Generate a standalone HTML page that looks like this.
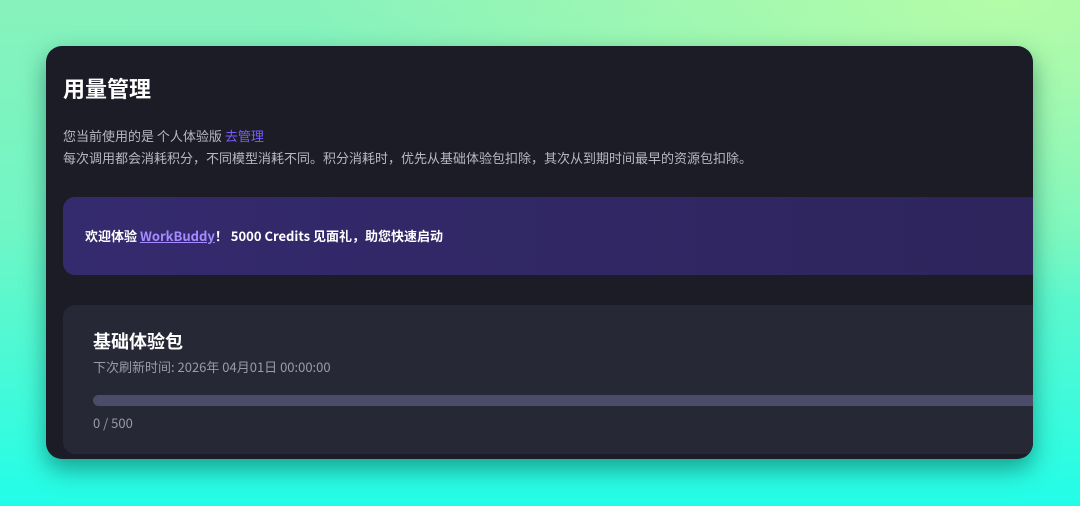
<!DOCTYPE html>
<html><head><meta charset="utf-8"><style>
*{margin:0;padding:0;box-sizing:border-box}
body{width:1080px;height:506px;overflow:hidden;font-family:"Noto Sans CJK SC","Liberation Sans",sans-serif;
background:radial-gradient(ellipse 700px 300px at 1000px 0px,#b4fca8 0%,rgba(180,252,168,0) 100%),linear-gradient(180deg,#88f2bc 0%,#70f6c4 45%,#22fde8 100%);position:relative}
.card{position:absolute;left:46px;top:46px;width:987px;height:413px;border-radius:16px;background:#1c1c26;overflow:hidden;
box-shadow:0 10px 24px rgba(0,70,60,.5)}
h1{position:absolute;left:17px;top:26px;font-size:22px;color:#fff;font-weight:bold;line-height:32px}
.p{position:absolute;left:17px;font-size:13px;color:#b8b8c4;line-height:18px;white-space:nowrap}
.p a{color:#7a5cff;text-decoration:none}
.ban{position:absolute;left:17px;top:151px;width:1100px;height:78px;border-radius:12px;background:linear-gradient(90deg,#342a6e,#2d245a);}
.ban div{position:absolute;left:22px;top:30px;font-size:13px;font-weight:bold;color:#fff;line-height:18px;white-space:nowrap}
.ban u{color:#a58bff}
.box{position:absolute;left:17px;top:259px;width:1100px;height:149px;border-radius:12px;background:#262835}
.box h2{position:absolute;left:30px;top:23px;font-size:18px;color:#fff;line-height:26px}
.box .s{position:absolute;left:30px;top:53px;font-size:13px;color:#9a9aa8;line-height:18px}
.bar{position:absolute;left:30px;top:90px;width:1100px;height:11px;border-radius:6px;background:#4a4c6a}
.box .n{position:absolute;left:30px;top:109px;font-size:13px;color:#9a9aa8;line-height:18px}
</style></head><body>
<div class="card">
<h1>用量管理</h1>
<div class="p" style="top:81px">您当前使用的是 个人体验版 <a>去管理</a></div>
<div class="p" style="top:103px">每次调用都会消耗积分，不同模型消耗不同。积分消耗时，优先从基础体验包扣除，其次从到期时间最早的资源包扣除。</div>
<div class="ban"><div>欢迎体验 <u>WorkBuddy</u>！ 5000 Credits 见面礼，助您快速启动</div></div>
<div class="box"><h2>基础体验包</h2><div class="s">下次刷新时间: 2026年 04月01日 00:00:00</div><div class="bar"></div><div class="n">0 / 500</div></div>
</div>
</body></html>
